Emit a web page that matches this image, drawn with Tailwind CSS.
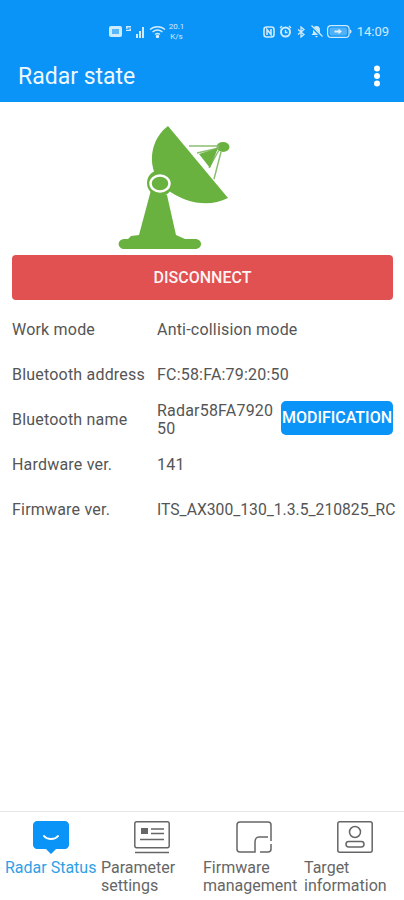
<!doctype html>
<html lang="en">
<head>
    <meta charset="UTF-8"/>
    <meta name="viewport" content="width=device-width, initial-scale=1.0"/>
    <title>Radar state</title>
    <script src="https://cdn.jsdelivr.net/npm/@tailwindcss/browser@4"></script>
</head>
<body class="h-[900px] w-[404px] flex flex-col bg-white overflow-hidden font-['Roboto',sans-serif] text-[#555]">
<div class="h-[102px] bg-[#0a94f7] text-white shrink-0">
    <div class="h-[50px] pt-[13px] flex items-center pl-[109px] pr-[15px] text-white/80">
        <svg width="13" height="11" viewBox="0 0 13 11" class="mr-[4px]"><rect width="13" height="11" rx="2" fill="currentColor"/><rect x="3" y="3" width="7" height="5" fill="#0a94f7" opacity=".6"/></svg>
        <svg width="18" height="12" viewBox="0 0 18 12" class="mr-[5px]"><path d="M0 0h5v1.500H1.500v1H5V5H0V3.800h3.500v-1H0zM10 8h2v4h-2zM13 5h2v7h-2zM16 1h2v11h-2z" fill="currentColor"/></svg>
        <svg width="17" height="13" viewBox="0 0 17 13" class="mr-[2px]" fill="none" stroke="currentColor" stroke-width="1.400"><path d="M1 4.500C5 .8 12 .8 16 4.500M3.500 7C6.500 4.500 10.500 4.500 13.500 7M6 9.500c1.500-1.200 3.500-1.200 5 0"/><circle cx="8.500" cy="11.500" r="1" fill="currentColor"/></svg>
        <div class="w-[17px] text-[8px] leading-[10px] text-center">20.1<br/>K/s</div>
        <div class="ml-auto flex items-center">
            <svg width="12" height="12" viewBox="0 0 12 12" class="mr-[4px]" fill="none" stroke="currentColor" stroke-width="1.600"><rect x="1" y="1" width="10" height="10" rx="2.500"/><path d="M4 9V3.500l4 5V3"/></svg>
            <svg width="13" height="13" viewBox="0 0 13 13" class="mr-[5px]" fill="none" stroke="currentColor"><circle cx="6.500" cy="7" r="4.500" stroke-width="2"/><path d="M1 3l2-2M12 3l-2-2M6.500 5v2.500h2" stroke-width="1.300"/></svg>
            <svg width="8" height="12" viewBox="0 0 8 12" class="mr-[5px]" fill="none" stroke="currentColor" stroke-width="1.300"><path d="M1 3.500l6 5L4 11V1l3 2.500-6 5"/></svg>
            <svg width="13" height="13" viewBox="0 0 13 13" class="mr-[4px]"><path d="M6.500 1C4 1 3 3 3 5v3L1.500 10h10L10 8V5c0-2-1-4-3.500-4zM5 11h3l-1.500 1.500z" fill="currentColor"/><path d="M1 1l11 11" stroke="#0a94f7" stroke-width="2.500"/><path d="M1.500 .5l11 11" stroke="currentColor" stroke-width="1.300"/></svg>
            <svg width="25" height="13" viewBox="0 0 25 13" class="mr-[5px]"><rect x=".6" y=".6" width="21.500" height="11.800" rx="3.500" fill="none" stroke="currentColor" stroke-width="1.200"/><rect x="2.500" y="2.500" width="17.500" height="8" rx="2" fill="currentColor" opacity=".35"/><path d="M23 4.500c1 .3 1.500 1 1.500 2s-.5 1.700-1.500 2z" fill="currentColor"/><path d="M7.500 5.500h4V3.800l3.500 2.700-3.500 2.700V7.500h-4z" fill="currentColor"/></svg>
            <span class="text-[13px] leading-none">14:09</span>
        </div>
    </div>
    <div class="h-[52px] flex items-center justify-between pl-[18px] pr-[23px]">
        <h1 class="text-[23px] text-white/95 mt-[2px]">Radar state</h1>
        <svg width="8" height="22" viewBox="0 0 8 22" fill="white"><circle cx="4" cy="3.500" r="3"/><circle cx="4" cy="11" r="3"/><circle cx="4" cy="18.500" r="3"/></svg>
    </div>
</div>
<div class="flex-1 flex flex-col pl-[12px] pr-[11px]">
    <svg width="204" height="150" viewBox="0 0 204 150" class="self-center mt-[8px] -mb-[5px] shrink-0">
        <path d="M67 16C52 27 47 48 54 64 64 86 100 102 127 88Z" fill="#6ab23f"/>
        <path d="M50 80L38 125 30 126 27 129H23C15 130 17 139 23 139H94C102 139 102 129 94 129H84L75 125 66 85Z" fill="#6ab23f"/>
        <circle cx="59" cy="73" r="13" fill="#6ab23f"/>
        <ellipse cx="59" cy="73.500" rx="9.500" ry="8" fill="none" stroke="white" stroke-width="2.500"/>
        <ellipse cx="122" cy="37" rx="6.500" ry="5" fill="#6ab23f"/>
        <path d="M88 36L118 36M96 43L118 38M113 69L120 42M108 58L118 40" stroke="#8dbf72" stroke-width="1.500" fill="none"/>
        <path d="M98 44L117 38 109 58Z" fill="#6ab23f"/>
    </svg>
    <button class="h-[45px] w-full bg-[#e25151] rounded-[4px] text-white/95 text-[16px] font-medium shrink-0">DISCONNECT</button>
    <div class="text-[16px] tracking-[0.2px] leading-[18px] mt-[7px]">
        <div class="h-[45px] flex items-center"><div class="w-[145px] shrink-0">Work mode</div><div>Anti-collision mode</div></div>
        <div class="h-[45px] flex items-center"><div class="w-[145px] shrink-0">Bluetooth address</div><div>FC:58:FA:79:20:50</div></div>
        <div class="h-[45px] flex items-center">
            <div class="w-[145px] shrink-0">Bluetooth name</div>
            <div class="w-[118px] mr-[6px] shrink-0 break-all">Radar58FA792050</div>
            <button class="w-[112px] h-[34px] mb-[4px] bg-[#0a94f7] rounded-[5px] text-white text-[16px] tracking-normal font-medium whitespace-nowrap flex items-center justify-center">MODIFICATION</button>
        </div>
        <div class="h-[45px] flex items-center"><div class="w-[145px] shrink-0">Hardware ver.</div><div>141</div></div>
        <div class="h-[45px] flex items-center"><div class="w-[145px] shrink-0">Firmware ver.</div><div class="whitespace-nowrap text-[15.7px] tracking-normal">ITS_AX300_130_1.3.5_210825_RC</div></div>
    </div>
</div>
<nav class="h-[89px] border-t border-[#e8e8e8] grid grid-cols-4 shrink-0 text-[16px] leading-[18px] text-[#666]">
    <div class="flex flex-col pt-[9px] text-[#2f9fe8]">
        <svg width="36" height="33" viewBox="0 0 36 33" class="ml-[33px] mb-[5px]"><path d="M4 0H32C34 0 36 2 36 4V24C36 26 34 28 32 28H23L18 33 13 28H4C2 28 0 26 0 24V4C0 2 2 0 4 0Z" fill="#0a94f7"/><path d="M11 15C14 19 22 19 25 15" fill="none" stroke="white" stroke-width="2" stroke-linecap="round"/></svg>
        <div class="pl-[5px] whitespace-nowrap">Radar Status</div>
    </div>
    <div class="flex flex-col pt-[9px]">
        <svg width="36" height="33" viewBox="0 0 36 33" class="ml-[33px] mb-[5px]" fill="none" stroke="#666" stroke-width="1.500"><rect x=".8" y=".8" width="34.400" height="26" rx="2"/><rect x="7" y="7" width="7" height="6" fill="#666" stroke="none"/><path d="M17 8H30M17 12.500H30M6 18.500H30M1 31.500H35"/></svg>
        <div class="pr-[20px]">Parameter settings</div>
    </div>
    <div class="flex flex-col pt-[9px] pl-px">
        <svg width="36" height="33" viewBox="0 0 36 33" class="ml-[33px] mb-[5px]" fill="none" stroke="#666" stroke-width="1.500"><path d="M35 20V4C35 2 33.500 1 32 1H4C2 1 1 2 1 4V28C1 30 2 31 4 31H19V21C19 19 20 16 23 16H32M35 23V28C35 30 34 31 32 31H24"/></svg>
        <div>Firmware management</div>
    </div>
    <div class="flex flex-col pt-[9px] pl-px">
        <svg width="36" height="33" viewBox="0 0 36 33" class="ml-[33px] mb-[5px]" fill="none" stroke="#666" stroke-width="1.500"><rect x=".8" y=".8" width="34.400" height="30.400" rx="2"/><circle cx="18" cy="11" r="5.500"/><rect x="9" y="20.500" width="18" height="5.500" rx="2.700"/></svg>
        <div class="pr-[10px]">Target information</div>
    </div>
</nav>
</body>
</html>
